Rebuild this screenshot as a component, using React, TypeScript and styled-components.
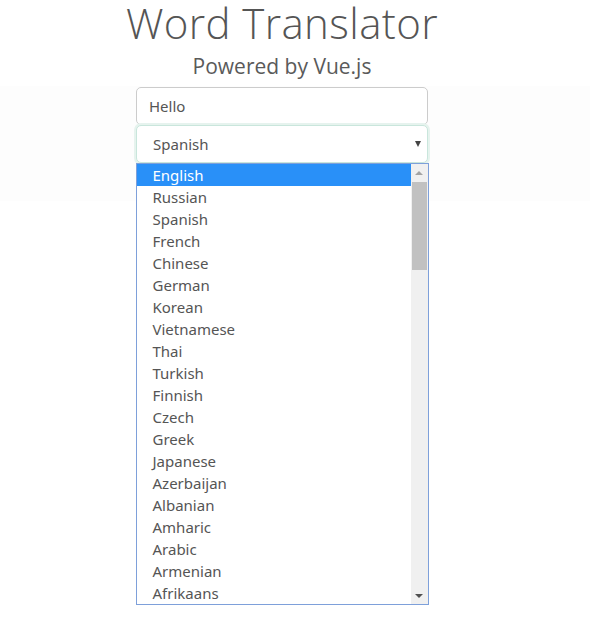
import styled, { createGlobalStyle } from "styled-components";

const GlobalStyle = createGlobalStyle`
  html, body {
    margin: 0;
    padding: 0;
    background: #fff;
  }
  body {
    font-family: "Open Sans", "Noto Sans", sans-serif;
  }
`;

const Page = styled.div`
  display: flex;
  flex-direction: column;
  width: 590px;
  min-height: 632px;
`;

const Header = styled.div`
  display: flex;
  flex-direction: column;
  align-items: center;
  padding-right: 26px;
`;

const Title = styled.h1`
  margin: 0;
  font-family: "Open Sans", sans-serif;
  font-weight: 300;
  font-size: 42px;
  line-height: 46px;
  color: #555;
  letter-spacing: 0.4px;
`;

const Subtitle = styled.h3`
  margin: 0;
  font-family: "Open Sans", sans-serif;
  font-weight: 400;
  font-size: 21px;
  line-height: 40px;
  color: #5a5a5a;
`;

const Band = styled.div`
  background: #fdfdfd;
  display: flex;
  justify-content: center;
  padding: 1px 26px 0 0;
  height: 114px;
`;

const Column = styled.div`
  width: 292px;
  display: flex;
  flex-direction: column;
`;

const TextInput = styled.div`
  box-sizing: border-box;
  height: 38px;
  border: 1px solid #ccc;
  border-radius: 5px;
  background: #fff;
  padding: 0 12px;
  display: flex;
  align-items: center;
  font-family: "Noto Sans", sans-serif;
  font-size: 15px;
  color: #555;
`;

const SelectBox = styled.div`
  box-sizing: border-box;
  height: 38px;
  border: 1px solid #c9e6dc;
  border-radius: 5px;
  background: #fff;
  box-shadow: 0 0 0 2px #e6f3ee;
  padding: 0 16px;
  display: flex;
  align-items: center;
  justify-content: space-between;
  font-family: "Noto Sans", sans-serif;
  font-size: 15px;
  color: #555;
`;

const Caret = styled.span`
  width: 0;
  height: 0;
  margin-right: -10px;
  border-left: 3.5px solid transparent;
  border-right: 3.5px solid transparent;
  border-top: 6px solid #444;
`;

const ListWrap = styled.div`
  display: flex;
  justify-content: center;
  padding-right: 26px;
  margin-top: -38px;
`;

const List = styled.div`
  box-sizing: border-box;
  width: 293px;
  height: 442px;
  border: 1px solid #7ea0da;
  background: #fff;
  display: flex;
`;

const Options = styled.div`
  flex: 1;
  display: flex;
  flex-direction: column;
`;

const Option = styled.div<{ $active?: boolean }>`
  height: 22px;
  line-height: 22px;
  padding-left: 16px;
  font-family: "Noto Sans", sans-serif;
  font-size: 15px;
  color: ${(p) => (p.$active ? "#fff" : "#555")};
  background: ${(p) => (p.$active ? "#2990f8" : "transparent")};
`;

const Scrollbar = styled.div`
  width: 17px;
  background: #f0f0f0;
  display: flex;
  flex-direction: column;
  align-items: center;
`;

const Arrow = styled.div<{ $down?: boolean }>`
  height: 17px;
  width: 17px;
  display: flex;
  align-items: center;
  justify-content: center;
  &::after {
    content: "";
    width: 0;
    height: 0;
    border-left: 4px solid transparent;
    border-right: 4px solid transparent;
    ${(p) =>
      p.$down
        ? "border-top: 4px solid #505050;"
        : "border-bottom: 4px solid #a3a3a3;"}
  }
`;

const Thumb = styled.div`
  width: 15px;
  height: 88px;
  background: #c1c1c1;
  margin-top: 1px;
`;

const Track = styled.div`
  flex: 1;
`;

const languages = [
  "English",
  "Russian",
  "Spanish",
  "French",
  "Chinese",
  "German",
  "Korean",
  "Vietnamese",
  "Thai",
  "Turkish",
  "Finnish",
  "Czech",
  "Greek",
  "Japanese",
  "Azerbaijan",
  "Albanian",
  "Amharic",
  "Arabic",
  "Armenian",
  "Afrikaans",
];

const App = () => {
  return (
    <Page>
      <GlobalStyle />
      <Header>
        <Title>Word Translator</Title>
        <Subtitle>Powered by Vue.js</Subtitle>
      </Header>
      <Band>
        <Column>
          <TextInput>Hello</TextInput>
          <SelectBox>
            Spanish
            <Caret />
          </SelectBox>
        </Column>
      </Band>
      <ListWrap>
        <List>
          <Options>
            {languages.map((l, i) => (
              <Option key={l} $active={i === 0}>
                {l}
              </Option>
            ))}
          </Options>
          <Scrollbar>
            <Arrow />
            <Thumb />
            <Track />
            <Arrow $down />
          </Scrollbar>
        </List>
      </ListWrap>
    </Page>
  );
};

export default App;
